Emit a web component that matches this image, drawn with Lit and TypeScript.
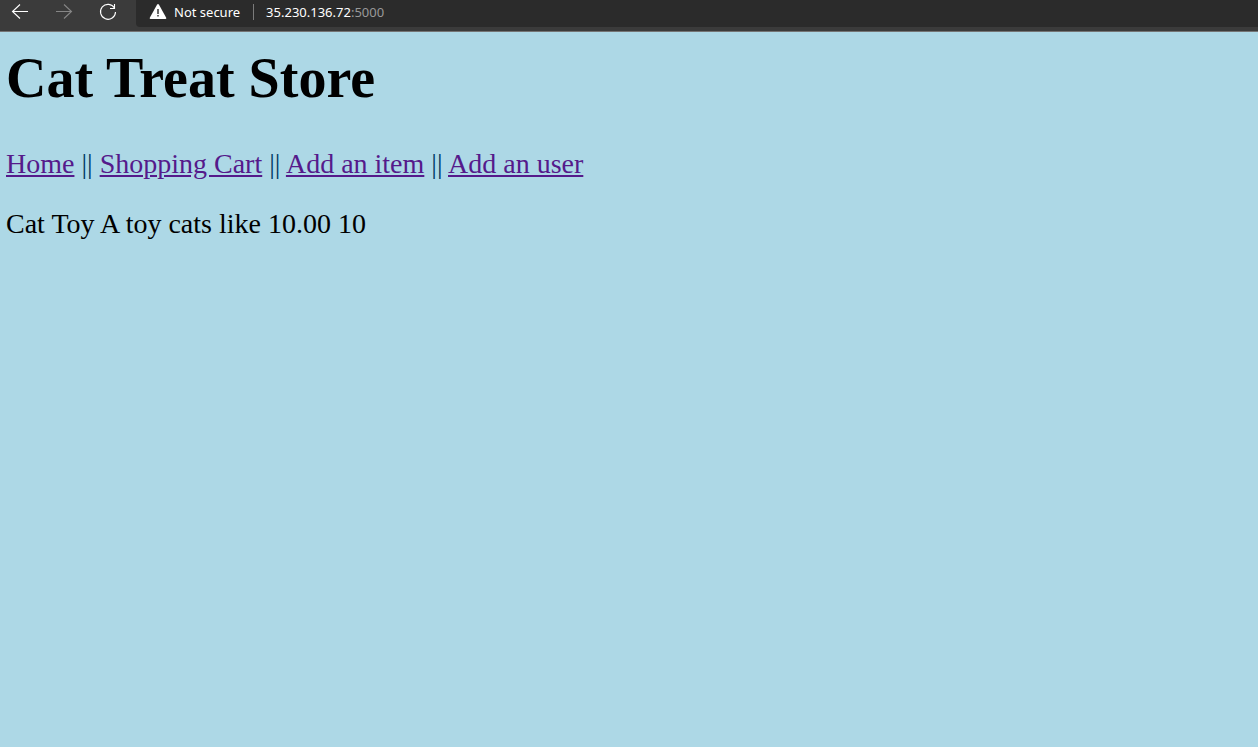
import { LitElement, html, css } from "lit";
import { customElement } from "lit/decorators.js";

@customElement("browser-bar")
export class BrowserBar extends LitElement {
  static styles = css`
    :host {
      display: flex;
      box-sizing: border-box;
      height: 32px;
      padding-bottom: 4px;
      background: #3b3b3b;
      border-bottom: 1px solid #747474;
      font: 13px/20px "Noto Sans", "Open Sans", sans-serif;
      color: #fff;
    }
    .controls {
      display: flex;
      gap: 20px;
      width: 136px;
      padding-left: 8px;
      box-sizing: border-box;
    }
    .control {
      display: block;
      width: 24px;
      height: 24px;
      padding: 0;
      border: 0;
      background: none;
      color: #fff;
    }
    .control:disabled {
      color: #868686;
    }
    svg {
      display: block;
    }
    .address {
      display: flex;
      flex: 1;
      align-items: flex-start;
      height: 27px;
      background: #2b2b2b;
      border-bottom-left-radius: 4px;
    }
    .warning {
      margin-left: 10px;
    }
    .security {
      margin: 2px 13px 0 4px;
    }
    .divider {
      width: 1px;
      height: 16px;
      margin: 4px 12px 0 0;
      background: #7b7b7b;
    }
    .location {
      margin-top: 2px;
    }
    .port {
      color: #999;
    }
  `;

  render() {
    return html`
      <div class="controls">
        <button class="control" aria-label="Back">
          <svg width="24" height="24" fill="none" stroke="currentColor" stroke-width="1.1">
            <path d="M20 11.5H4.5M12 4.5l-7.5 7 7.5 7" />
          </svg>
        </button>
        <button class="control" aria-label="Forward" disabled>
          <svg width="24" height="24" fill="none" stroke="currentColor" stroke-width="1.1">
            <path d="M4 11.5h15.5M12 4.5l7.5 7-7.5 7" />
          </svg>
        </button>
        <button class="control" aria-label="Refresh">
          <svg width="24" height="24" fill="none" stroke="currentColor" stroke-width="1.1">
            <path d="M18.5 8.1A7.5 7.5 0 1 0 19.5 12M18.5 4v4.5H14" />
          </svg>
        </button>
      </div>
      <div class="address">
        <svg class="warning" width="24" height="24" aria-hidden="true">
          <path fill="#fff" d="M11 4.7q1-1.4 2 0l7.2 13.1q.5 1.2-.8 1.2H4.6q-1.3 0-.8-1.2z" />
          <path fill="#2b2b2b" d="M11.3 9h1.4v5h-1.4zM11.3 15h1.4v1.6h-1.4z" />
        </svg>
        <span class="security">Not secure</span>
        <span class="divider"></span>
        <span class="location">35.230.136.72<span class="port">:5000</span></span>
      </div>
    `;
  }
}

@customElement("app-root")
export class AppRoot extends LitElement {
  static styles = css`
    :host {
      display: flex;
      flex-direction: column;
      min-height: 100vh;
      background: #add8e6;
      font: 28px/32px "Liberation Serif", "Times New Roman", serif;
      color: #000;
    }
    main {
      padding: 14px 6px;
    }
    h1 {
      margin: 0 0 38px;
      font-size: 56px;
      line-height: 64px;
    }
    nav {
      margin-bottom: 28px;
    }
    a {
      color: #551a8b;
    }
    .divider {
      color: #003c64;
    }
    p {
      margin: 0;
    }
  `;

  private links = ["Home", "Shopping Cart", "Add an item", "Add an user"];

  render() {
    return html`
      <browser-bar></browser-bar>
      <main>
        <h1>Cat Treat Store</h1>
        <nav>
          ${this.links.map(
            (label, i) => html`${i ? html` <span class="divider">||</span> ` : ""}<a href="#">${label}</a>`
          )}
        </nav>
        <p>Cat Toy A toy cats like 10.00 10</p>
      </main>
    `;
  }
}
